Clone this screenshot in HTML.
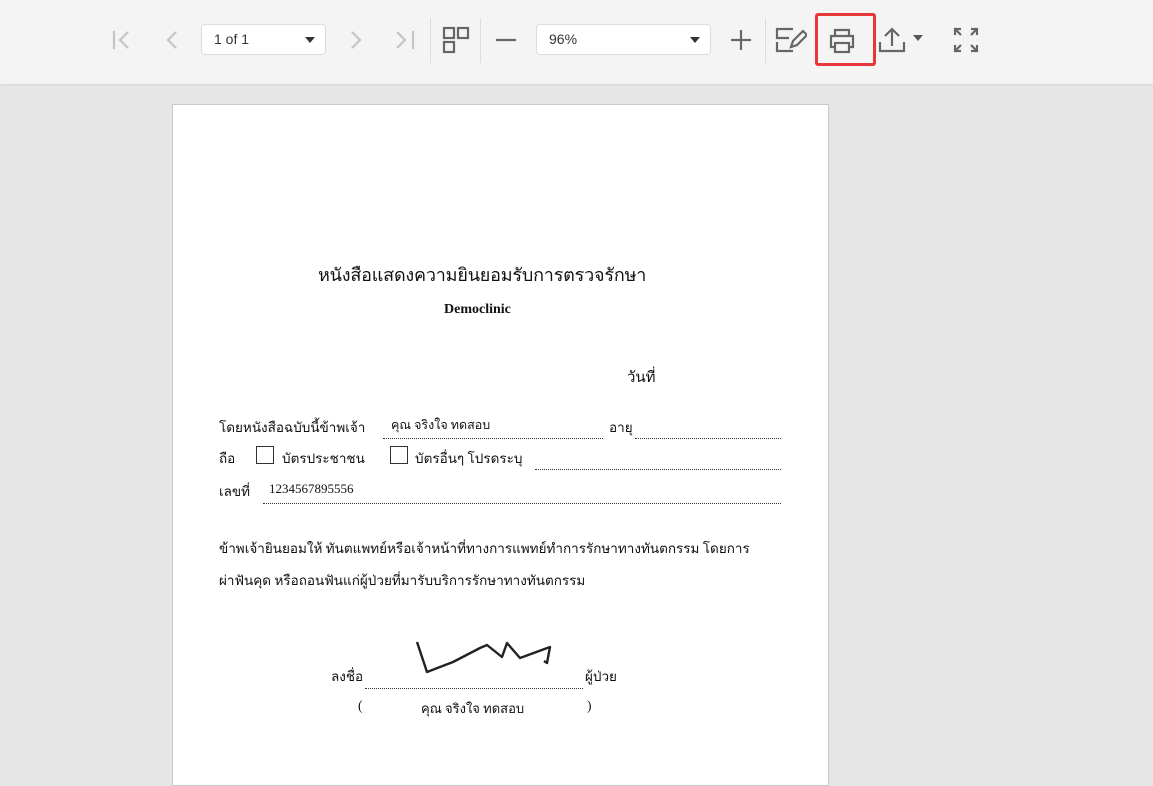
<!DOCTYPE html>
<html><head><meta charset="utf-8"><style>
body{margin:0;width:1153px;height:771px;overflow:hidden;background:#e6e6e6;font-family:"Liberation Sans",sans-serif;position:relative}
.tb{position:absolute;left:0;top:0;width:1153px;height:84px;background:#f4f4f4;box-shadow:0 1px 2px rgba(0,0,0,.08)}
.ic{position:absolute}
.sel{position:absolute;top:24px;height:31px;background:#fff;border:1px solid #ddd;border-radius:4px;box-sizing:border-box;font-size:14px;color:#333;line-height:29px;padding-left:12px}
.sel:after{content:"";position:absolute;right:10px;top:12px;border-left:5px solid transparent;border-right:5px solid transparent;border-top:6px solid #333}
.sep{position:absolute;top:18px;width:1px;height:45px;background:#ddd}
.page{position:absolute;left:172px;top:104px;width:655px;height:680px;background:#fff;border:1px solid #c8c8c8}
.t{position:absolute;font-family:"Liberation Serif",serif;color:#111;font-size:13.5px;white-space:nowrap;letter-spacing:0}
.dot{position:absolute;border-bottom:1px dotted #333;height:0}
</style></head><body>
<div class="tb">
<svg class="ic" style="left:110px;top:28px" width="24" height="24" viewBox="0 0 24 24" fill="none" stroke="#c4c4c4" stroke-width="2.2"><path d="M4 3v18M18 4l-8 8 8 8"/></svg>
<svg class="ic" style="left:160px;top:28px" width="24" height="24" viewBox="0 0 24 24" fill="none" stroke="#c4c4c4" stroke-width="2.2"><path d="M16 4l-8 8 8 8"/></svg>
<div class="sel" style="left:201px;width:125px">1 of 1</div>
<svg class="ic" style="left:344px;top:28px" width="24" height="24" viewBox="0 0 24 24" fill="none" stroke="#c4c4c4" stroke-width="2.2"><path d="M8 4l8 8-8 8"/></svg>
<svg class="ic" style="left:393px;top:28px" width="24" height="24" viewBox="0 0 24 24" fill="none" stroke="#c4c4c4" stroke-width="2.2"><path d="M4 4l8 8-8 8M20 3v18"/></svg>
<div class="sep" style="left:430px"></div>
<svg class="ic" style="left:442px;top:26px" width="28" height="28" viewBox="0 0 28 28" fill="none" stroke="#666" stroke-width="2.2"><rect x="2" y="2" width="10" height="10"/><rect x="16" y="2" width="10" height="10"/><rect x="2" y="16" width="10" height="10"/></svg>
<div class="sep" style="left:480px"></div>
<svg class="ic" style="left:494px;top:28px" width="24" height="24" viewBox="0 0 24 24" stroke="#666" stroke-width="2.2"><path d="M2 12h20"/></svg>
<div class="sel" style="left:536px;width:175px">96%</div>
<svg class="ic" style="left:729px;top:28px" width="24" height="24" viewBox="0 0 24 24" stroke="#666" stroke-width="2.2"><path d="M2 12h20M12 2v20"/></svg>
<div class="sep" style="left:765px"></div>
<svg class="ic" style="left:775px;top:27px" width="32" height="26" viewBox="0 0 32 26" fill="none" stroke="#666" stroke-width="2.2"><path d="M18 2H2v9h12M2 15v9h16"/><path d="M16 20l2-6 10-10 4 4-10 10z"/></svg>
<div style="position:absolute;left:815px;top:13px;width:61px;height:53px;border:3px solid #e8373a;border-radius:3px;box-sizing:border-box"></div>
<svg class="ic" style="left:828px;top:27px" width="28" height="28" viewBox="0 0 28 28" fill="none" stroke="#666" stroke-width="2.2"><path d="M7 9V3h14v6M7 20H3V9h22v11h-4"/><rect x="7" y="16" width="14" height="9"/></svg>
<svg class="ic" style="left:878px;top:26px" width="28" height="28" viewBox="0 0 28 28" fill="none" stroke="#666" stroke-width="2.2"><path d="M14 20V3M7 10l7-7 7 7M2 16v9h24v-9"/></svg>
<div style="position:absolute;left:913px;top:35px;border-left:5px solid transparent;border-right:5px solid transparent;border-top:6px solid #555"></div>
<svg class="ic" style="left:953px;top:27px" width="26" height="26" viewBox="0 0 26 26" fill="none" stroke="#666" stroke-width="2.2"><path d="M2 8V2h6M2 2l6 6M18 2h6v6M24 2l-6 6M2 18v6h6M2 24l6-6M24 18v6h-6M24 24l-6-6"/></svg>
</div>
<div class="page">
<div class="t" style="left:145px;top:155px;font-size:18px;letter-spacing:-0.2px">หนังสือแสดงความยินยอมรับการตรวจรักษา</div>
<div class="t" style="left:271px;top:197px;font-weight:bold;font-size:14px">Democlinic</div>
<div class="t" style="left:454px;top:260px;font-size:15px">วันที่</div>
<div class="t" style="left:46px;top:311px">โดยหนังสือฉบับนี้ข้าพเจ้า</div>
<div class="t" style="left:218px;top:310px;font-size:12.5px">คุณ จริงใจ ทดสอบ</div>
<div class="t" style="left:436px;top:311px">อายุ</div>
<div class="dot" style="left:210px;top:333px;width:220px"></div>
<div class="dot" style="left:462px;top:333px;width:146px"></div>
<div class="t" style="left:46px;top:342px">ถือ</div>
<div style="position:absolute;left:83px;top:341px;width:16px;height:16px;border:1.5px solid #333"></div>
<div class="t" style="left:109px;top:342px">บัตรประชาชน</div>
<div style="position:absolute;left:217px;top:341px;width:16px;height:16px;border:1.5px solid #333"></div>
<div class="t" style="left:242px;top:342px">บัตรอื่นๆ โปรดระบุ</div>
<div class="dot" style="left:362px;top:364px;width:246px"></div>
<div class="t" style="left:46px;top:375px">เลขที่</div>
<div class="t" style="left:96px;top:376px;font-size:13px">1234567895556</div>
<div class="dot" style="left:90px;top:398px;width:518px"></div>
<div class="t" style="left:46px;top:432px">ข้าพเจ้ายินยอมให้ ทันตแพทย์หรือเจ้าหน้าที่ทางการแพทย์ทำการรักษาทางทันตกรรม โดยการ</div>
<div class="t" style="left:46px;top:464px">ผ่าฟันคุด หรือถอนฟันแก่ผู้ป่วยที่มารับบริการรักษาทางทันตกรรม</div>
<svg style="position:absolute;left:240px;top:528px" width="145" height="42" viewBox="0 0 145 42" fill="none" stroke="#222" stroke-width="2.4" stroke-linejoin="round"><path d="M4 9L14 39L40 29L67 15L74 12L89 24L94 10L107 25L137 14L134 30L131 28"/></svg>
<div class="t" style="left:158px;top:560px">ลงชื่อ</div>
<div class="dot" style="left:192px;top:583px;width:218px"></div>
<div class="t" style="left:412px;top:560px">ผู้ป่วย</div>
<div class="t" style="left:185px;top:593px">(</div>
<div class="t" style="left:248px;top:593px;font-size:13px">คุณ จริงใจ ทดสอบ</div>
<div class="t" style="left:414px;top:593px">)</div>
</div>
</body></html>
